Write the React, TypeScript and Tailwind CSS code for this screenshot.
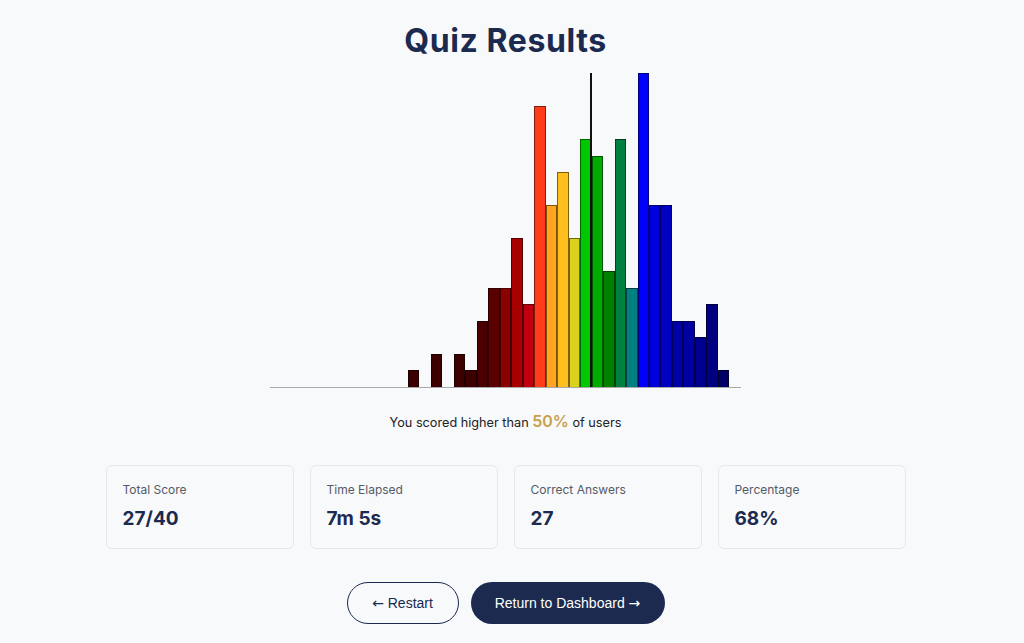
import React from 'react'

const bins: { h: number; c: string }[] = [
  ...Array.from({ length: 12 }, () => ({ h: 0, c: '' })),
  { h: 1, c: '#3d0000' },
  { h: 0, c: '' },
  { h: 2, c: '#3d0000' },
  { h: 0, c: '' },
  { h: 2, c: '#3d0000' },
  { h: 1, c: '#3d0000' },
  { h: 4, c: '#4a0000' },
  { h: 6, c: '#5a0000' },
  { h: 6, c: '#8b0000' },
  { h: 9, c: '#a80000' },
  { h: 5, c: '#c00010' },
  { h: 17, c: '#ff3c1a' },
  { h: 11, c: '#ffa51f' },
  { h: 13, c: '#ffbf1f' },
  { h: 9, c: '#d9d11a' },
  { h: 15, c: '#00c800' },
  { h: 14, c: '#00ac00' },
  { h: 7, c: '#008000' },
  { h: 15, c: '#008040' },
  { h: 6, c: '#008080' },
  { h: 19, c: '#0000ff' },
  { h: 11, c: '#0000dd' },
  { h: 11, c: '#0000c0' },
  { h: 4, c: '#0000a8' },
  { h: 4, c: '#0000a0' },
  { h: 3, c: '#000090' },
  { h: 5, c: '#000080' },
  { h: 1, c: '#000066' },
  { h: 0, c: '' },
]

const unit = 314 / 19

const stats = [
  { label: 'Total Score', value: '27/40' },
  { label: 'Time Elapsed', value: '7m 5s' },
  { label: 'Correct Answers', value: '27' },
  { label: 'Percentage', value: '68%' },
]

export default function App() {
  return (
    <main
      className="min-h-screen flex flex-col items-center pt-[21px] pr-[13px] bg-[#f7f9fb]"
      style={{ fontFamily: 'Inter, "Noto Sans", sans-serif' }}
    >
      <h1 className="text-[32px] leading-[40px] font-bold text-[#1b2a4e] tracking-[0.6px]">Quiz Results</h1>

      <div className="relative mt-[12px] w-[471px] h-[315px] flex items-end border-b border-[#a8a8a8]">
        {bins.map((b, i) => (
          <div key={i} className="flex-1 h-full flex items-end">
            {b.h > 0 && (
              <div
                className="w-full border border-black/50 border-b-0"
                style={{ height: b.h * unit, background: b.c }}
              />
            )}
          </div>
        ))}
        <div className="absolute left-[320px] top-0 bottom-0 w-[2px] bg-[#111]" />
      </div>

      <p className="mt-[23px] text-[12.7px] leading-[20px] text-[#222]">
        You scored higher than <span className="text-[16px] font-semibold text-[#c9a14a]">50%</span> of users
      </p>

      <div className="mt-[32px] flex gap-4">
        {stats.map(s => (
          <div key={s.label} className="w-[188px] h-[84px] rounded-md border border-[#e6e8ec] bg-[#f8f9fb] px-4 pt-4">
            <div className="text-[12px] leading-[16px] text-[#555b66]">{s.label}</div>
            <div className="mt-[9px] text-[19px] leading-[24px] font-bold text-[#1b2a4e]">{s.value}</div>
          </div>
        ))}
      </div>

      <div className="mt-[33px] flex gap-3" style={{ fontFamily: '"Liberation Sans", Arial, sans-serif' }}>
        <button className="h-[42px] w-[112px] rounded-full border-[1.5px] border-[#1b2a4e] text-[14px] text-[#1b2a4e]">
          <span style={{ fontFamily: '"DejaVu Sans", sans-serif' }}>←</span> Restart
        </button>
        <button className="h-[42px] w-[194px] rounded-full bg-[#1b2a4e] text-[14px] text-white">
          Return to Dashboard <span style={{ fontFamily: '"DejaVu Sans", sans-serif' }}>→</span>
        </button>
      </div>
    </main>
  )
}
